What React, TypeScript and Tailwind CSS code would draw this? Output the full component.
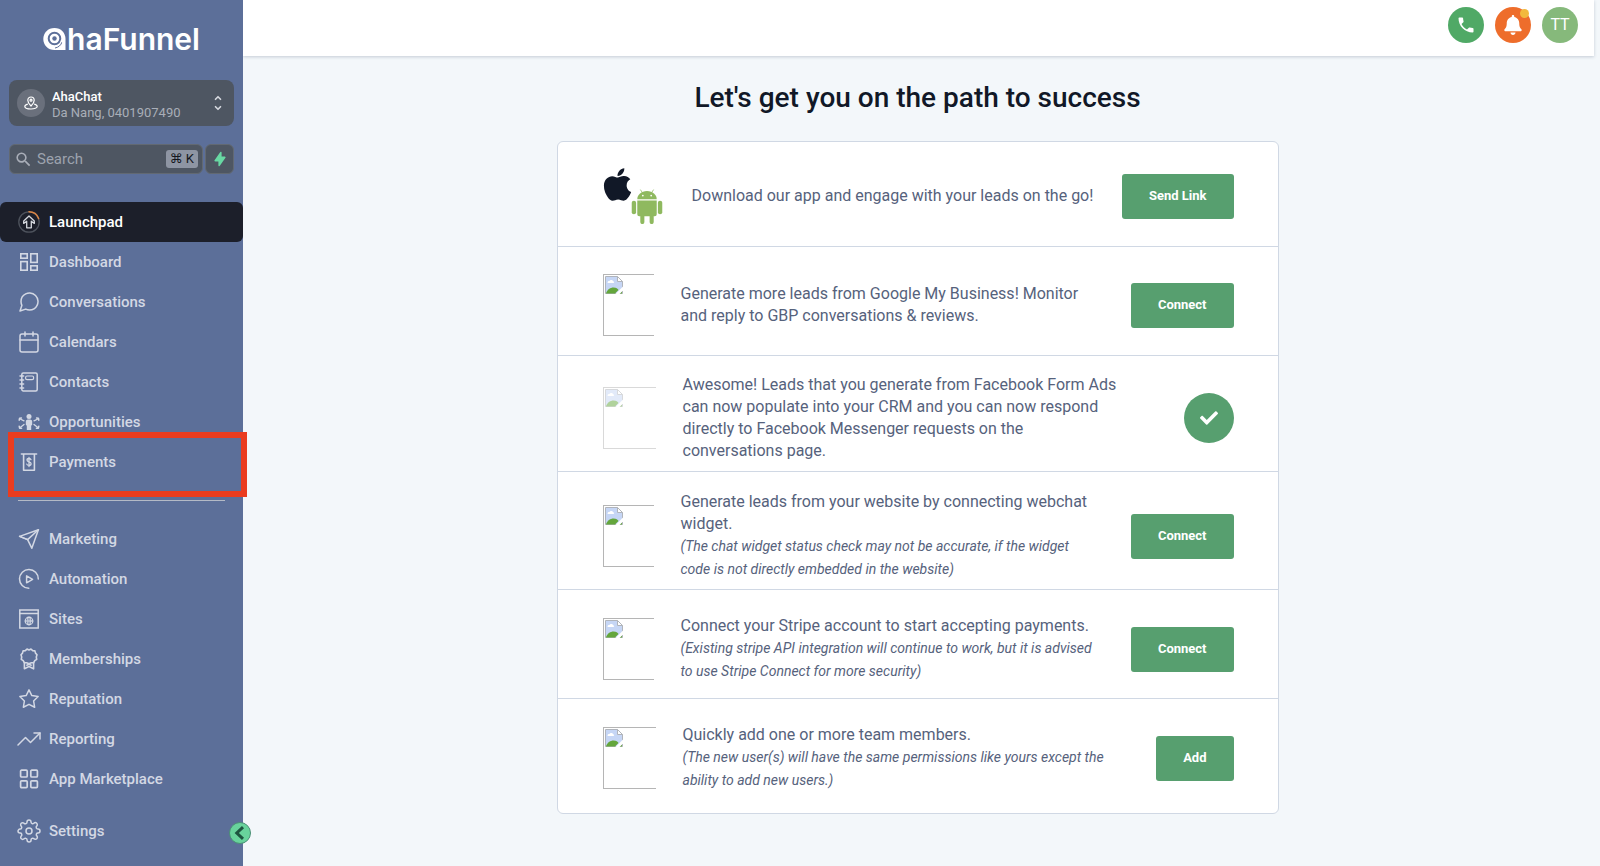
import React from "react";
import { FaApple, FaBell, FaCheck } from "react-icons/fa";
import { FiCalendar, FiMessageCircle, FiSettings, FiStar, FiTrendingUp, FiChevronUp, FiChevronDown } from "react-icons/fi";
import { MdPhone, MdSearch } from "react-icons/md";
import { HiLightningBolt } from "react-icons/hi";

function Glyph({ children }: { children: React.ReactNode }) {
  return (
    <svg
      viewBox="0 0 22 22"
      className="size-[22px] shrink-0"
      fill="none"
      stroke="currentColor"
      strokeWidth="1.5"
      strokeLinecap="round"
      strokeLinejoin="round"
      aria-hidden="true"
    >
      {children}
    </svg>
  );
}

const LaunchpadIcon = () => (
  <Glyph>
    <circle cx="11" cy="11" r="10.2" stroke="#4d525c" strokeWidth="1.3" />
    <path d="M11 .8a10.2 10.2 0 0 1 9.6 6.8" stroke="#d98444" strokeWidth="1.5" />
    <path d="M11 5l5.3 5v2.4l-3-2.2v6.6H8.7v-6.6l-3 2.2V10z" strokeWidth="1.3" stroke="#d5d8de" />
  </Glyph>
);

const DashboardIcon = () => (
  <Glyph>
    <g strokeWidth="1.6" strokeLinejoin="miter">
      <rect x="2.8" y="2.8" width="6.4" height="4.4" />
      <rect x="12.8" y="2.8" width="6.4" height="8.6" />
      <rect x="2.8" y="10.6" width="6.4" height="8.6" />
      <rect x="12.8" y="14.8" width="6.4" height="4.4" />
    </g>
  </Glyph>
);

const ContactsIcon = () => (
  <Glyph>
    <rect x="3.8" y="2" width="15.4" height="18" rx="1.5" />
    <rect x="7.6" y="5" width="8" height="3.6" rx="1.4" strokeWidth="1.2" />
    <path d="M2 5h3.6M2 9h3.6M2 13h3.6M2 17h3.6" />
  </Glyph>
);

const OpportunitiesIcon = () => (
  <Glyph>
    <circle cx="11" cy="5.4" r="2.5" fill="currentColor" stroke="none" />
    <path d="M7.8 10.5c0-1.300 1.200-1.900 3.200-1.900s3.200.6 3.200 1.900v3.300l-1 .9v4.300H8.800v-4.300l-1-.9z" fill="currentColor" stroke="none" />
    <path d="M6 9.800L2.200 8M6 13.400l-3.800 3M16 9.800L19.800 8M16 13.400l3.800 3" strokeWidth="1.300" />
    <path d="M1.200 9.200l.4-2 1.800-.2M1.200 15.200l.4 2 2 0M20.800 9.200l-.4-2-1.800-.2M20.800 15.200l-.4 2-2 0" strokeWidth="1.500" />
  </Glyph>
);

const PaymentsIcon = () => (
  <Glyph>
    <path d="M3.400 3h15.200M5.600 3.400v15.800h10.800V3.400" strokeWidth="1.600" />
    <path d="M13 8.700c-.3-.9-1-1.200-2-1.200-1.100 0-2 .5-2 1.600 0 2.400 4.100 1.200 4.100 3.600 0 1.100-.9 1.700-2.100 1.700-1.100 0-1.900-.4-2.200-1.300M11 6.400v9.200" strokeWidth="1.300" />
  </Glyph>
);

const MarketingIcon = () => (
  <Glyph>
    <path d="M1.600 8.400L20.400 1.800l-6.600 18.400-4.200-8.600z" />
    <path d="M20.400 1.800L9.600 11.600M1.600 8.400l8 3.200" />
  </Glyph>
);

const AutomationIcon = () => (
  <Glyph>
    <path d="M10.800 20.300A9.400 9.400 0 1 1 20.300 11" />
    <path d="M8.600 7.800v7l6-3.500z" />
  </Glyph>
);

const SitesIcon = () => (
  <Glyph>
    <g strokeLinejoin="miter">
      <rect x="1.800" y="2" width="18.400" height="18" />
      <path d="M1.800 5.600h18.400" />
    </g>
    <circle cx="11" cy="13" r="3.800" strokeWidth="1.200" />
    <path d="M7.200 13h7.600M11 9.200v7.600" strokeWidth="1" />
    <ellipse cx="11" cy="13" rx="1.900" ry="3.800" strokeWidth=".9" />
  </Glyph>
);

const MembershipsIcon = () => (
  <Glyph>
    <path
      d="M11 2l2-.9 1.700 1.500 2.200.3.600 2.200 1.500 1.700-.7 2.200.4 2.300-1.900 1.300-1.100 2-2.300.1L11 15.800l-2.400-1.100-2.300-.1-1.100-2-1.900-1.300.4-2.300L3 6.800l1.500-1.700.6-2.200 2.200-.3L9 1.100z"
      strokeWidth="1.600"
    />
    <path d="M6.400 14.600v6.200L11 18.500l4.600 2.300v-6.200" strokeWidth="1.600" />
    <path d="M8.800 17.200L11 16.200l2.200 1" />
  </Glyph>
);

const MarketplaceIcon = () => (
  <Glyph>
    <g strokeWidth="1.700">
      <rect x="2.600" y="2.200" width="6.600" height="6.800" rx="1" />
      <rect x="12.800" y="2.200" width="6.600" height="6.800" rx="1" />
      <rect x="2.600" y="12.800" width="6.600" height="6.800" rx="1" />
      <rect x="12.800" y="12.800" width="6.600" height="6.800" rx="1" />
    </g>
  </Glyph>
);

const feather = "size-6 shrink-0 [stroke-width:1.500]";

type NavItem = { label: string; icon: React.ReactNode; active?: boolean; marked?: boolean };

const primary: NavItem[] = [
  { label: "Launchpad", icon: <LaunchpadIcon />, active: true },
  { label: "Dashboard", icon: <DashboardIcon /> },
  { label: "Conversations", icon: <FiMessageCircle className={feather} /> },
  { label: "Calendars", icon: <FiCalendar className={feather} /> },
  { label: "Contacts", icon: <ContactsIcon /> },
  { label: "Opportunities", icon: <OpportunitiesIcon /> },
  { label: "Payments", icon: <PaymentsIcon />, marked: true },
];

const secondary: NavItem[] = [
  { label: "Marketing", icon: <MarketingIcon /> },
  { label: "Automation", icon: <AutomationIcon /> },
  { label: "Sites", icon: <SitesIcon /> },
  { label: "Memberships", icon: <MembershipsIcon /> },
  { label: "Reputation", icon: <FiStar className="size-[22px] shrink-0 [stroke-width:1.600]" /> },
  { label: "Reporting", icon: <FiTrendingUp className={feather} /> },
  { label: "App Marketplace", icon: <MarketplaceIcon /> },
];

function NavRow({ item }: { item: NavItem }) {
  return (
    <li className="relative">
      <a
        href="#"
        className={
          item.active
            ? "flex h-10 items-center gap-2 rounded-md bg-[#1c1f2a] pl-[18px] text-[15px] font-medium text-white"
            : "flex h-10 items-center gap-2 pl-[18px] text-[15px] font-medium text-[#d3d8e4]"
        }
      >
        <span className="flex w-[22px] shrink-0 justify-center">{item.icon}</span>
        <span className="pl-px">{item.label}</span>
      </a>
      {item.marked && (
        <span className="pointer-events-none absolute -top-[10px] -right-1 -bottom-[15px] left-2 z-10 border-[6px] border-[#ea3c1f]" />
      )}
    </li>
  );
}

function Logo() {
  return (
    <div className="flex items-center justify-center text-white">
      <svg viewBox="0 0 24 24" className="size-6 shrink-0" aria-hidden="true">
        <path d="M11.500 1C5 1 .3 5.800.3 12S5 23 11.500 23H22.500V12C22.500 5.800 18 1 11.500 1z" fill="#fff" />
        <circle cx="11.500" cy="11.500" r="5.800" fill="none" stroke="#5c6f99" strokeWidth="2" />
        <circle cx="11.500" cy="11.500" r="2.200" fill="#5c6f99" />
        <path d="M12 21c3.500-.6 6-2.800 7-6" fill="none" stroke="#5c6f99" strokeWidth="1" />
        <path d="M17 14l3.600-1.800-.6 4z" fill="#fff" />
      </svg>
      <span className="font-[Inter,sans-serif] text-[30px] leading-8 font-semibold">haFunnel</span>
    </div>
  );
}

function Sidebar() {
  return (
    <aside className="relative flex w-[243px] shrink-0 flex-col bg-[#5c6f99] pt-[23px]">
      <Logo />
      <button
        type="button"
        className="mx-[9px] mt-[25px] flex h-[46px] items-center gap-[7px] rounded-lg bg-[#4e5662] pr-[11px] pl-2 text-left"
      >
        <span className="flex size-7 shrink-0 items-center justify-center rounded-full bg-[#6a707c] text-white">
          <svg viewBox="0 0 16 16" className="size-4" fill="none" stroke="currentColor" strokeWidth="1.200" strokeLinejoin="round" aria-hidden="true">
            <path d="M8 11S4.800 8 4.800 5.200a3.200 3.200 0 0 1 6.400 0C11.200 8 8 11 8 11z" />
            <circle cx="8" cy="5.200" r="1" />
            <path d="M4.800 9.200C3 9.700 1.800 10.500 1.800 11.500c0 1.500 2.800 2.500 6.200 2.500s6.200-1 6.200-2.500c0-1-1.200-1.800-3-2.300" />
          </svg>
        </span>
        <span className="flex-1 pt-1">
          <span className="block text-[13px] leading-4 font-medium text-white">AhaChat</span>
          <span className="block text-[13px] leading-4 text-[#a9aeb8]">Da Nang, 0401907490</span>
        </span>
        <span className="flex flex-col items-center text-[#d5d8de]">
          <FiChevronUp className="size-[10px] [stroke-width:4]" />
          <FiChevronDown className="size-[10px] [stroke-width:4]" />
        </span>
      </button>

      <div className="mx-[9px] mt-[18px] flex gap-[2px]">
        <label className="flex h-[30px] min-w-0 flex-1 items-center gap-1 rounded-md border border-[#626972] bg-[#4e5662] pr-1 pl-1">
          <MdSearch className="size-[19px] shrink-0 text-[#a9aeb8]" />
          <input
            type="text"
            aria-label="Search"
            placeholder="Search"
            className="w-0 min-w-0 flex-1 bg-transparent text-[15px] text-white outline-none placeholder:text-[#9da3ae]"
          />
          <kbd className="flex h-[18px] items-center rounded-[3px] bg-[#8e95a3] px-1 font-[Roboto,'DejaVu_Sans',sans-serif] text-[13px] text-[#15181f]">
            ⌘ K
          </kbd>
        </label>
        <button type="button" aria-label="Quick actions" className="flex h-[30px] w-[29px] items-center justify-center rounded-md border border-[#626972] bg-[#4e5662] text-[#68d8a3]">
          <HiLightningBolt className="size-4" />
        </button>
      </div>

      <nav className="pt-7">
        <ul>
          {primary.map((item) => (
            <NavRow key={item.label} item={item} />
          ))}
        </ul>
        <hr className="mt-[18px] mr-[18px] mb-[18px] ml-[18px] border-[#b4bac6]" />
        <ul>
          {secondary.map((item) => (
            <NavRow key={item.label} item={item} />
          ))}
        </ul>
        <ul className="pt-3">
          <NavRow item={{ label: "Settings", icon: <FiSettings className={feather} /> }} />
        </ul>
      </nav>

      <button
        type="button"
        aria-label="Collapse sidebar"
        className="absolute top-[822px] -right-2 flex size-[22px] items-center justify-center rounded-full border border-[#4a8f75] bg-[#68d39c] text-[#1d5540]"
      >
        <svg viewBox="0 0 14 14" className="size-[14px] shrink-0" fill="none" stroke="currentColor" strokeWidth="3" aria-hidden="true">
          <path d="M10 1.200L3.800 7l6.200 5.800" />
        </svg>
      </button>
    </aside>
  );
}

function BrokenImage({ className }: { className: string }) {
  return (
    <div className={`h-[62px] shrink-0 border border-r-0 border-[#b5b5b5] pt-px pl-px ${className}`}>
      <svg viewBox="0 0 18 18" className="size-[18px]" role="img" aria-label="Image unavailable">
        <path d="M.5.500h12l5 5v12H.5z" fill="#c6d6f5" stroke="#b0b4bb" />
        <path d="M12.500.500v5h5z" fill="#fff" stroke="#b0b4bb" />
        <path d="M2.500 6.800c0-1.300 1-1.900 2-1.700.6-1.500 3.200-1.500 3.600.2 1.300 0 1.500 1.500.4 1.700H3z" fill="#fff" />
        <path d="M1 17.500c1-4 4.500-6 7.500-6s4 1.200 5 2.500L10 17.500z" fill="#64a63c" />
        <path d="M14.500 17.500l2.500-2.400v2.400z" fill="#64a63c" />
        <path d="M10 18.500L18.500 10v4l-4.500 4.500z" fill="#fff" />
      </svg>
    </div>
  );
}

function AppLogos() {
  return (
    <div className="flex h-14 w-[62px] shrink-0 items-start">
      <svg viewBox="0 0 28 33" className="h-[33px] w-7 shrink-0 overflow-visible text-[#111827]" aria-hidden="true">
        <FaApple x="-4" y="-2" size={37} />
      </svg>
      <svg viewBox="0 0 32 36" className="h-[35px] w-8 shrink-0 self-end" fill="#8fb95f" aria-hidden="true">
        <path d="M6 10.500C6 5.800 10.200 2 16 2s10 3.800 10 8.500z" />
        <path d="M9.200.600l2.600 4M22.800.600l-2.600 4" stroke="#8fb95f" strokeWidth=".8" />
        <path d="M6 11.800h20v14.200a2 2 0 0 1-2 2h-1.100v6a2.100 2.100 0 0 1-4.200 0v-6h-5.400v6a2.100 2.100 0 0 1-4.200 0v-6H8a2 2 0 0 1-2-2z" />
        <rect x=".3" y="12" width="4.500" height="14" rx="2.200" />
        <rect x="27.200" y="12" width="4.500" height="14" rx="2.200" />
        <circle cx="11.700" cy="6.800" r=".9" fill="#fff" />
        <circle cx="20.300" cy="6.800" r=".9" fill="#fff" />
      </svg>
    </div>
  );
}

function ActionButton({ children }: { children: React.ReactNode }) {
  return (
    <button type="button" className="ml-auto h-[45px] shrink-0 rounded-[3px] bg-[#579f6f] px-[27px] text-[13px] font-bold text-white">
      {children}
    </button>
  );
}

function Copy({ text, note, className }: { text: string; note?: string; className: string }) {
  return (
    <div className={className}>
      <p className="text-base leading-[22px] text-[#56627c]">{text}</p>
      {note && <p className="text-sm leading-[23px] text-[#56627c] italic">{note}</p>}
    </div>
  );
}

function Header() {
  return (
    <header className="mr-[6px] flex h-14 items-center justify-end gap-[11px] bg-white pr-4 pb-[6px] shadow-[0_1px_3px_rgba(60,80,110,0.25)]">
      <button type="button" aria-label="Call" className="flex size-9 items-center justify-center rounded-full bg-[#50a966] text-white">
        <MdPhone className="size-5" />
      </button>
      <button type="button" aria-label="Notifications" className="relative flex size-9 items-center justify-center rounded-full bg-[#ee6d2b] text-white">
        <FaBell className="size-5" />
        <span className="absolute top-[2px] right-[2px] size-[9px] rounded-full bg-[#f2b93c]" />
      </button>
      <button type="button" className="flex size-9 items-center justify-center rounded-full bg-[#86b97b] text-base text-white">
        TT
      </button>
    </header>
  );
}

export default function App() {
  return (
    <div className="flex min-h-screen bg-[#f3f7fa] font-[Roboto,sans-serif]">
      <Sidebar />
      <div className="min-w-0 flex-1">
        <Header />
        <main className="mr-2 flex flex-col items-center px-6 pt-[26px]">
          <h1 className="text-[28px] leading-8 font-medium text-[#111827]">Let's get you on the path to success</h1>
          <section className="mt-[27px] w-full max-w-[722px] divide-y divide-[#d0d8e4] rounded-md border border-[#d0d8e4] bg-white [&>div]:flex [&>div]:items-center [&>div]:pr-11 [&>div]:pl-[45px]">
            <div className="pt-[26px] pb-[22px]">
              <AppLogos />
              <Copy className="ml-[27px] max-w-[412px]" text="Download our app and engage with your leads on the go!" />
              <ActionButton>Send Link</ActionButton>
            </div>
            <div className="pt-[27px] pb-[19px]">
              <BrokenImage className="w-[51px]" />
              <Copy
                className="ml-[27px] max-w-[412px]"
                text="Generate more leads from Google My Business! Monitor and reply to GBP conversations & reviews."
              />
              <ActionButton>Connect</ActionButton>
            </div>
            <div className="pt-[18px] pb-[9px]">
              <BrokenImage className="w-[53px] opacity-50" />
              <Copy
                className="ml-[27px] max-w-[444px]"
                text="Awesome! Leads that you generate from Facebook Form Ads can now populate into your CRM and you can now respond directly to Facebook Messenger requests on the conversations page."
              />
              <span className="ml-auto flex size-[50px] shrink-0 items-center justify-center rounded-full bg-[#579f6f] text-white" role="img" aria-label="Connected">
                <FaCheck className="size-[18px]" />
              </span>
            </div>
            <div className="pt-[19px] pb-2">
              <BrokenImage className="w-[51px]" />
              <Copy
                className="ml-[27px] max-w-[412px]"
                text="Generate leads from your website by connecting webchat widget."
                note="(The chat widget status check may not be accurate, if the widget code is not directly embedded in the website)"
              />
              <ActionButton>Connect</ActionButton>
            </div>
            <div className="pt-[25px] pb-[15px]">
              <BrokenImage className="w-[51px]" />
              <Copy
                className="ml-[27px] max-w-[420px]"
                text="Connect your Stripe account to start accepting payments."
                note="(Existing stripe API integration will continue to work, but it is advised to use Stripe Connect for more security)"
              />
              <ActionButton>Connect</ActionButton>
            </div>
            <div className="pt-[25px] pb-[21px]">
              <BrokenImage className="w-[53px]" />
              <Copy
                className="ml-[27px] max-w-[444px]"
                text="Quickly add one or more team members."
                note="(The new user(s) will have the same permissions like yours except the ability to add new users.)"
              />
              <ActionButton>Add</ActionButton>
            </div>
          </section>
        </main>
      </div>
    </div>
  );
}
